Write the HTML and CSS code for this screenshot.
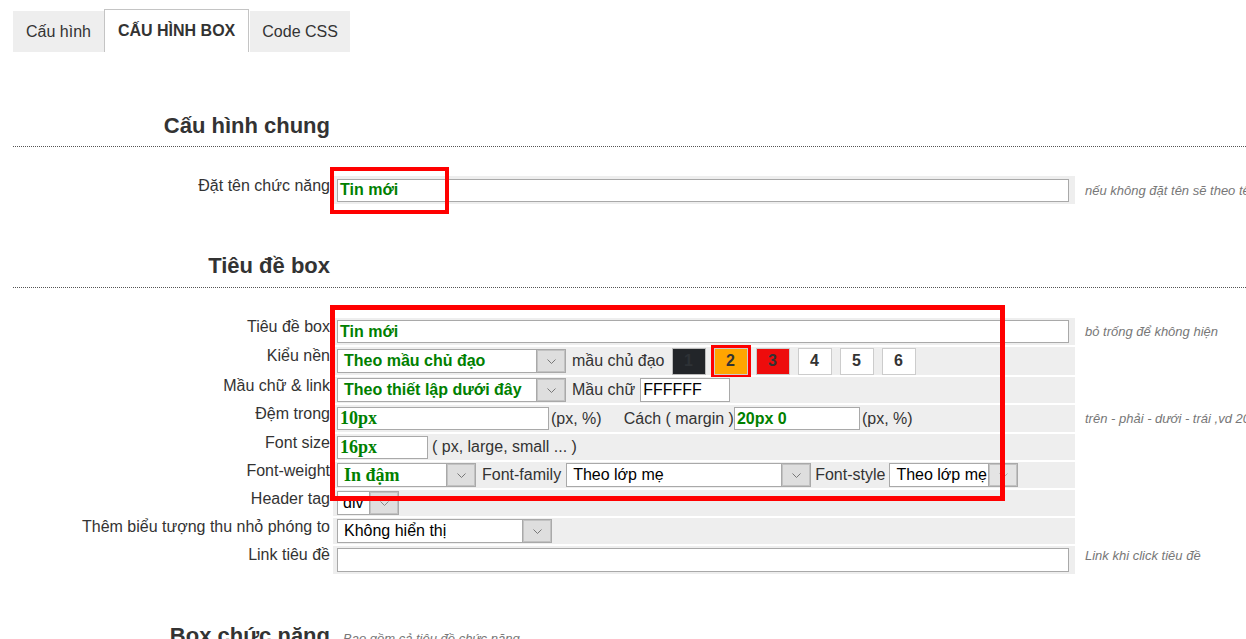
FILE: index.html
```html
<!DOCTYPE html>
<html lang="vi">
<head>
<meta charset="utf-8">
<title>Cấu hình box</title>
<link rel="stylesheet" href="styles.css">
</head>
<body>
<div class="tabs">
  <div class="tab">Cấu hình</div>
  <div class="tab active">CẤU HÌNH BOX</div>
  <div class="tab">Code CSS</div>
</div>

<section class="group g1">
  <div class="head"><h2>Cấu hình chung</h2><span class="note"></span></div>
  <div class="rows r1">
    <div class="lbl">Đặt tên chức năng</div>
    <div class="val"><div class="in full"><span class="green">Tin mới</span></div></div>
    <div class="hint">nếu không đặt tên sẽ theo tên mặc định của chức năng</div>
  </div>
</section>

<section class="group g2">
  <div class="head"><h2>Tiêu đề box</h2><span class="note"></span></div>
  <div class="rows r2">
    <div class="lbl">Tiêu đề box</div>
    <div class="val"><div class="in full"><span class="green">Tin mới</span></div></div>
    <div class="hint">bỏ trống để không hiện</div>

    <div class="lbl">Kiểu nền</div>
    <div class="val">
      <div class="sel w229"><span class="sv green">Theo mầu chủ đạo</span><span class="arr"><svg width="9" height="5" viewBox="0 0 9 5"><polyline points="0.5,0.5 4.5,4.5 8.5,0.5" fill="none" stroke="#777"/></svg></span></div>
      <span class="t ml6">mầu chủ đạo</span>
      <span class="sw c1 first">1</span>
      <span class="sw c2 picked">2</span>
      <span class="sw c3">3</span>
      <span class="sw">4</span>
      <span class="sw">5</span>
      <span class="sw">6</span>
    </div>
    <div class="hint"></div>

    <div class="lbl">Mầu chữ &amp; link</div>
    <div class="val">
      <div class="sel w229"><span class="sv green">Theo thiết lập dưới đây</span><span class="arr"><svg width="9" height="5" viewBox="0 0 9 5"><polyline points="0.5,0.5 4.5,4.5 8.5,0.5" fill="none" stroke="#777"/></svg></span></div>
      <span class="t ml6">Mầu chữ</span>
      <div class="in w90 tall ml5"><span>FFFFFF</span></div>
    </div>
    <div class="hint"></div>

    <div class="lbl">Đệm trong</div>
    <div class="val">
      <div class="in w212"><span class="green serif">10px</span></div>
      <span class="t ml2">(px, %)</span>
      <span class="t ml22">Cách ( margin )</span>
      <div class="in w126"><span class="green">20px 0</span></div>
      <span class="t ml2">(px, %)</span>
    </div>
    <div class="hint">trên - phải - dưới - trái ,vd 20px 10px 20px 10px</div>

    <div class="lbl">Font size</div>
    <div class="val">
      <div class="in w91"><span class="green serif">16px</span></div>
      <span class="t ml4">( px, large, small ... )</span>
    </div>
    <div class="hint"></div>

    <div class="lbl">Font-weight</div>
    <div class="val">
      <div class="sel w139"><span class="sv green serif">In đậm</span><span class="arr"><svg width="9" height="5" viewBox="0 0 9 5"><polyline points="0.5,0.5 4.5,4.5 8.5,0.5" fill="none" stroke="#777"/></svg></span></div>
      <span class="t ml6">Font-family</span>
      <div class="sel w245 ml5"><span class="sv">Theo lớp mẹ</span><span class="arr"><svg width="9" height="5" viewBox="0 0 9 5"><polyline points="0.5,0.5 4.5,4.5 8.5,0.5" fill="none" stroke="#777"/></svg></span></div>
      <span class="t ml4">Font-style</span>
      <div class="sel w129 ml4"><span class="sv">Theo lớp mẹ</span><span class="arr faint"><svg width="9" height="5" viewBox="0 0 9 5"><polyline points="0.5,0.5 4.5,4.5 8.5,0.5" fill="none" stroke="#aaa"/></svg></span></div>
    </div>
    <div class="hint"></div>

    <div class="lbl">Header tag</div>
    <div class="val">
      <div class="sel w62"><span class="sv">div</span><span class="arr"><svg width="9" height="5" viewBox="0 0 9 5"><polyline points="0.5,0.5 4.5,4.5 8.5,0.5" fill="none" stroke="#888"/></svg></span></div>
    </div>
    <div class="hint"></div>

    <div class="lbl">Thêm biểu tượng thu nhỏ phóng to</div>
    <div class="val">
      <div class="sel w215"><span class="sv">Không hiển thị</span><span class="arr"><svg width="9" height="5" viewBox="0 0 9 5"><polyline points="0.5,0.5 4.5,4.5 8.5,0.5" fill="none" stroke="#777"/></svg></span></div>
    </div>
    <div class="hint"></div>

    <div class="lbl">Link tiêu đề</div>
    <div class="val"><div class="in full tall"><span></span></div></div>
    <div class="hint up">Link khi click tiêu đề</div>
  </div>
</section>

<section class="group g3">
  <div class="head"><h2>Box chức năng</h2><span class="note">Bao gồm cả tiêu đề chức năng</span></div>
</section>

<div class="mark mark1"></div>
<div class="mark mark2"></div>
</body>
</html>
```

FILE: styles.css
```css
html, body {
  margin: 0;
  padding: 0;
  background: #fff;
}
body {
  overflow: hidden;
  position: relative;
  font-family: "Liberation Sans", Arial, sans-serif;
  font-size: 16px;
  color: #333;
  width: 1246px;
  height: 639px;
}

/* tabs */
.tabs {
  display: flex;
  align-items: flex-end;
  padding-left: 13px;
  margin-top: 9px;
  height: 43px;
}
.tab {
  height: 41px;
  line-height: 41px;
  padding: 0 13px;
  background: #eee;
  font-size: 16px;
  color: #333;
}
.tab.active {
  height: 43px;
  line-height: 42px;
  background: #fff;
  border: 1px solid #c4c4c4;
  border-bottom: none;
  font-weight: bold;
  margin-right: 1px;
  box-sizing: border-box;
}
.tab:last-child {
  padding: 0 12px;
}

/* groups */
.group {
  padding-left: 13px;
}
.g1 { margin-top: 61px; }
.g2 { margin-top: 49px; }
.g3 { margin-top: 49px; }

.head {
  display: grid;
  grid-template-columns: 318px 1fr;
  column-gap: 2px;
  align-items: baseline;
  border-bottom: 1px dotted #555;
  padding-bottom: 7px;
}
.g2 .head { padding-bottom: 8px; }
.head h2 {
  margin: 0;
  font-size: 22px;
  line-height: 26px;
  font-weight: bold;
  text-align: right;
  padding-right: 1px;
  color: #333;
}
.note {
  padding-left: 10px;
  font-style: italic;
  font-size: 13px;
  color: #777;
}

.rows {
  display: grid;
  grid-template-columns: 318px 742px 1fr;
  column-gap: 2px;
  row-gap: 2px;
  margin-top: 29px;
}
.r1 { grid-auto-rows: 28px; }
.r1 .lbl { padding-top: 1px; }
.r2 {
  grid-template-rows: 27px 28px 26px 27px 26px 26px 26px 26px 28px;
  margin-top: 30px;
}

.lbl {
  text-align: right;
  padding-right: 1px;
  font-size: 16px;
  line-height: 18px;
  white-space: nowrap;
  color: #333;
}
.val {
  background: #eee;
  display: flex;
  align-items: center;
  padding: 0 6px 0 4px;
  white-space: nowrap;
}
.hint {
  padding-left: 8px;
  display: flex;
  align-items: center;
  font-style: italic;
  font-size: 13px;
  color: #777;
  white-space: nowrap;
  overflow: hidden;
}
.hint.up { align-items: flex-start; padding-top: 2px; }

/* fake inputs */
.in {
  box-sizing: border-box;
  height: 23px;
  border: 1px solid #a9a9a9;
  background: #fff;
  padding: 0 2px;
  display: flex;
  align-items: center;
  font-size: 16px;
  color: #000;
  overflow: hidden;
}
.in.tall { height: 24px; }
.full { width: 732px; }
.w90 { width: 90px; }
.w212 { width: 212px; }
.w126 { width: 126px; }
.w91 { width: 91px; }

.green {
  color: #008000;
  font-weight: bold;
}
.serif {
  font-family: "Liberation Serif", "Times New Roman", serif;
  font-size: 18px;
}

/* fake selects */
.sel {
  box-sizing: border-box;
  height: 24px;
  border: 1px solid #a9a9a9;
  background: #fff;
  display: flex;
  align-items: stretch;
  color: #000;
  font-size: 16px;
  overflow: hidden;
}
.sv {
  flex: 1;
  min-width: 0;
  padding-left: 6px;
  display: flex;
  align-items: center;
  overflow: hidden;
  white-space: nowrap;
}
.sel.w62 .sv { padding-left: 5px; }
.arr {
  width: 28px;
  flex: none;
  background: #dedede;
  border-left: 1px solid #a9a9a9;
  box-shadow: inset 0 0 0 1px #c2c2c2;
  display: flex;
  align-items: center;
  justify-content: center;
}
.arr.faint { background: #e4e4e4; }
.w229 { width: 229px; }
.w139 { width: 139px; }
.w245 { width: 245px; }
.w129 { width: 129px; }
.w62 { width: 62px; }
.w215 { width: 215px; }

/* inline texts */
.t {
  font-size: 16px;
  color: #333;
}
.ml2 { margin-left: 2px; }
.ml4 { margin-left: 4px; }
.ml5 { margin-left: 5px; }
.ml6 { margin-left: 6px; }
.ml22 { margin-left: 22px; }

/* colour swatches */
.sw {
  box-sizing: border-box;
  width: 34px;
  height: 27px;
  border: 1px solid #ccc;
  background: #fff;
  margin-left: 8px;
  display: flex;
  align-items: center;
  justify-content: center;
  font-weight: bold;
  font-size: 16px;
  color: #333;
}
.sw.first { margin-left: 7px; }
.c1 { background: #222529; color: #2e3236; border-color: #bbb; }
.c2 { background: #ffa500; }
.c3 { background: #ee0c0c; }
.picked {
  outline: 3px solid #f00;
  outline-offset: 0;
}

/* red annotation frames */
.mark {
  position: absolute;
  box-sizing: border-box;
  border: 4px solid #f00;
  pointer-events: none;
}
.mark1 {
  left: 330px;
  top: 167px;
  width: 119px;
  height: 47px;
}
.mark2 {
  left: 330px;
  top: 305px;
  width: 675px;
  height: 196px;
  border-width: 5px;
}
```
